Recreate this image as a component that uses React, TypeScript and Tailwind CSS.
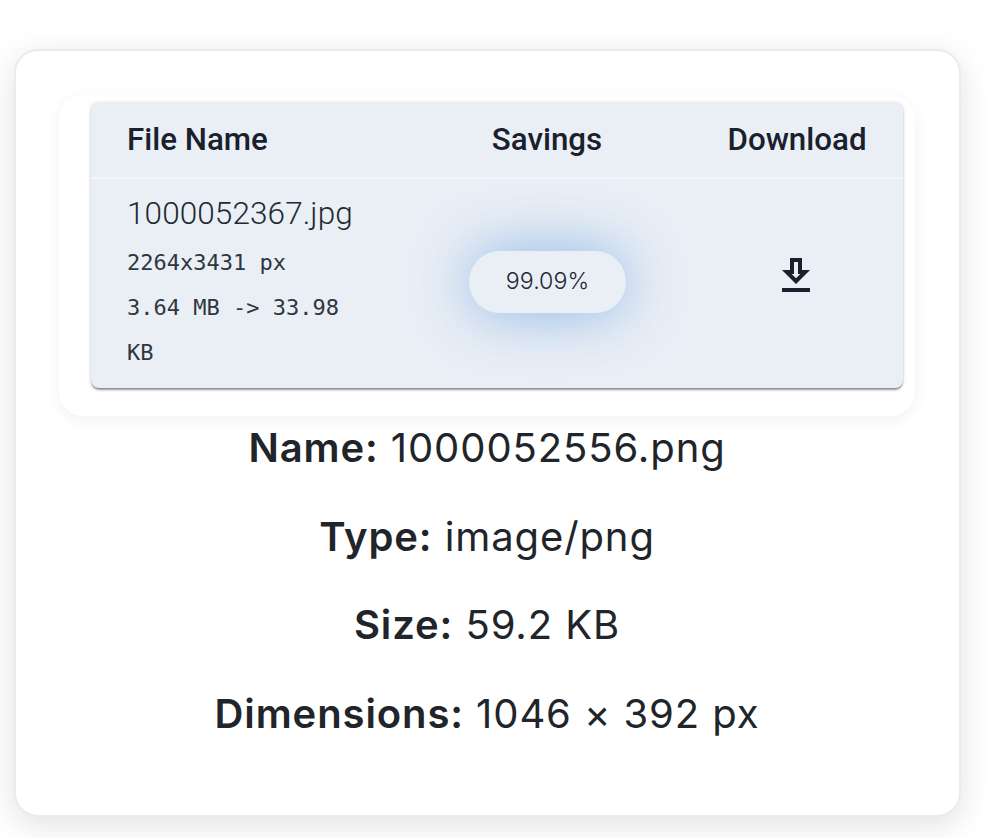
export default function App() {
  const rows: [string, string][] = [
    ["Name:", "1000052556.png"],
    ["Type:", "image/png"],
    ["Size:", "59.2 KB"],
    ["Dimensions:", "1046 × 392 px"],
  ];
  return (
    <div className="w-[998px] h-[838px] bg-white overflow-hidden pt-[49px] pl-[14px] font-['Inter',sans-serif] text-[#212529]">
      <div className="w-[947px] h-[768px] rounded-[24px] border-2 border-[#e8ecf0] bg-white shadow-[0_8px_32px_rgba(0,0,0,0.12)] pt-[44px] pl-[43px]">
        <div className="w-[856px] h-[321px] rounded-[24px] bg-white shadow-[0_4px_16px_rgba(0,0,0,0.06)] pt-[7px] pl-[32px]">
          <div className="w-[812px] h-[286px] rounded-[8px] bg-[#eaeff6] shadow-[0_3px_2px_-1px_rgba(0,0,0,0.3),0_1px_2px_0_rgba(0,0,0,0.2),0_1px_5px_0_rgba(0,0,0,0.1)] font-['Roboto',sans-serif]">
            <div className="flex h-[77px] items-center border-b-2 border-[#f3f5fa] text-[31.3px] font-medium text-[#1a202c] pt-[1px]">
              <div className="w-[312px] pl-[36px]">File Name</div>
              <div className="w-[288px] text-center">Savings</div>
              <div className="w-[212px] text-center">Download</div>
            </div>
            <div className="flex h-[209px] items-center">
              <div className="w-[312px] pl-[36px] pr-[36px] text-[#212932]">
                <div className="text-[31.5px] font-light leading-[44px] tracking-[0.1px]">1000052367.jpg</div>
                <div className="font-['DejaVu_Sans_Mono',monospace] text-[22px] leading-[45.3px] mt-[4px] text-[#2f3640]">
                  <div>2264x3431 px</div>
                  <div>3.64 MB -&gt; 33.98 KB</div>
                </div>
              </div>
              <div className="w-[288px] flex justify-center pb-[4px]">
                <div className="w-[157px] h-[62px] rounded-full bg-[#eaeff6] flex items-center justify-center pl-[1px] shadow-[0_0_60px_rgba(130,175,225,0.9)] font-['Inter',sans-serif] font-light text-[23.2px] text-[#212932]">
                  99.09%
                </div>
              </div>
              <div className="w-[212px] flex justify-center pb-[16px] pr-[2px]">
                <svg viewBox="0 0 24 24" className="w-[48px] h-[48px] fill-[#1a202c]">
                  <path d="M19 9h-4V3H9v6H5l7 7 7-7zm-8 2V5h2v6h1.17L12 13.17 9.83 11H11zm-6 7h14v2H5z" />
                </svg>
              </div>
            </div>
          </div>
        </div>
        <div className="w-[856px] text-center text-[40px] tracking-[0.9px] leading-[60px] font-normal mt-[2px] flex flex-col gap-[28.7px]">
          {rows.map(([k, v]) => (
            <div key={k}>
              <span className="font-semibold">{k}</span> {v}
            </div>
          ))}
        </div>
      </div>
    </div>
  );
}
